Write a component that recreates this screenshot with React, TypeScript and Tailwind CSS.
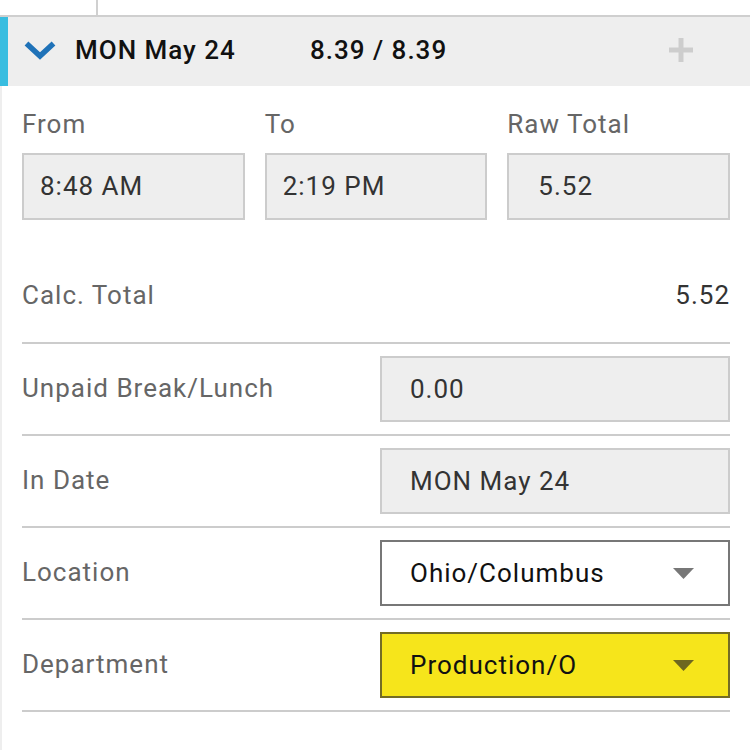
import React from "react";

function Chevron() {
  return (
    <svg width="32" height="19" viewBox="0 0 32 19">
      <polyline points="2.5,2.5 16,15 29.5,2.5" fill="none" stroke="#1f72b8" strokeWidth="5.5" strokeLinejoin="miter" />
    </svg>
  );
}

function Plus() {
  return (
    <svg width="24" height="24" viewBox="0 0 24 24">
      <rect x="9.5" y="0" width="5" height="24" fill="#cdcdcd" />
      <rect x="0" y="9.5" width="24" height="5" fill="#cdcdcd" />
    </svg>
  );
}

function Caret({ color }: { color: string }) {
  return (
    <svg width="21" height="11" viewBox="0 0 21 11">
      <polygon points="0,0 21,0 10.5,11" fill={color} />
    </svg>
  );
}

function Row({ label, children }: { label: string; children: React.ReactNode }) {
  return (
    <div className="flex items-center h-[92px] border-b-2 border-[#cccccc]">
      <div className="flex-1 text-[26px] leading-[30px] text-[#666666] pb-[2px]">{label}</div>
      <div className="w-[350px] h-[66px]">{children}</div>
    </div>
  );
}

export default function App() {
  return (
    <div className="w-[750px] h-[750px] bg-white overflow-hidden tracking-[1px]" style={{ fontFamily: "Roboto, 'Noto Sans', sans-serif" }}>
      <div className="flex h-[15px]">
        <div className="w-[96px]" />
        <div className="w-[2px] bg-[#d0d0d0]" />
      </div>
      <div className="h-[2px] bg-[#cfcfcf]" />
      <div className="flex items-center h-[69px] bg-[#eeeeee] border-l-[8px] border-[#38bde0] pl-[16px] pb-[3px]">
        <Chevron />
        <div className="ml-[19px] w-[235px] text-[26px] font-medium text-[#111111] leading-[30px]">MON May 24</div>
        <div className="flex-1 text-[26px] font-medium text-[#111111] leading-[30px]">8.39 / 8.39</div>
        <div className="mr-[57px] flex items-center"><Plus /></div>
      </div>
      <div className="border-l-2 border-[#eeeeee] pl-[20px] pr-[20px] h-[664px]">
        <div className="grid grid-cols-3 gap-x-[20px] pt-[23px]">
          <div className="text-[26px] leading-[30px] text-[#666666]">From</div>
          <div className="text-[26px] leading-[30px] text-[#666666]">To</div>
          <div className="text-[26px] leading-[30px] text-[#666666]">Raw Total</div>
          <div className="mt-[14px] h-[67px] bg-[#eeeeee] border-2 border-[#cccccc] flex items-center pl-[16px] text-[26px] text-[#333333]">8:48 AM</div>
          <div className="mt-[14px] h-[67px] bg-[#eeeeee] border-2 border-[#cccccc] flex items-center pl-[16px] text-[26px] text-[#333333]">2:19 PM</div>
          <div className="mt-[14px] h-[67px] bg-[#eeeeee] border-2 border-[#cccccc] flex items-center pl-[29px] text-[26px] text-[#333333]">5.52</div>
        </div>
        <div className="flex justify-between pt-[60px] pb-[32px] border-b-2 border-[#cccccc] text-[26px] leading-[30px]">
          <span className="text-[#666666]">Calc. Total</span>
          <span className="text-[#333333]">5.52</span>
        </div>
        <Row label="Unpaid Break/Lunch">
          <div className="h-full bg-[#eeeeee] border-2 border-[#cccccc] flex items-center pl-[28px] text-[26px] text-[#333333]">0.00</div>
        </Row>
        <Row label="In Date">
          <div className="h-full bg-[#eeeeee] border-2 border-[#cccccc] flex items-center pl-[28px] text-[26px] text-[#333333]">MON May 24</div>
        </Row>
        <Row label="Location">
          <div className="h-full bg-white border-2 border-[#777777] flex items-center justify-between pl-[28px] pr-[34px] text-[26px] text-[#111111]">
            <span>Ohio/Columbus</span>
            <Caret color="#777777" />
          </div>
        </Row>
        <Row label="Department">
          <div className="h-full bg-[#f6e51b] border-2 border-[#736c25] flex items-center justify-between pl-[28px] pr-[34px] text-[26px] text-[#111111]">
            <span>Production/O</span>
            <Caret color="#6e6720" />
          </div>
        </Row>
      </div>
    </div>
  );
}
